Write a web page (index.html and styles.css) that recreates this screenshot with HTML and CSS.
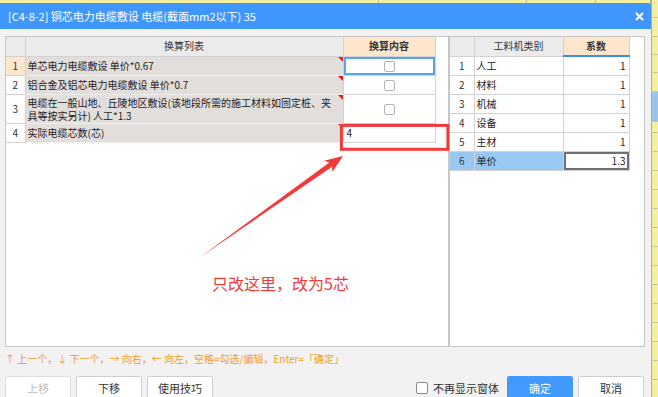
FILE: index.html
```html
<!DOCTYPE html>
<html lang="zh-CN">
<head>
    <meta charset="UTF-8">
    <title>换算</title>
    <link rel="stylesheet" href="styles.css">
</head>
<body>
    <div class="sheet">
        <div class="srow top"><span class="c c1"></span><span class="c c2"></span><span class="c c3"></span><span class="c c4"></span><span class="c c5"></span></div>
        <div class="srow r15"><span class="c c1"></span><span class="c c2"></span><span class="c c3"></span><span class="c c4"></span><span class="c c5"></span></div>
        <div class="srow"><span class="c c1"></span><span class="c c2"></span><span class="c c3"></span><span class="c c4"></span><span class="c c5"></span></div>
        <div class="srow r18"><span class="c c1"></span><span class="c c2"></span><span class="c c3"></span><span class="c c4"></span><span class="c c5"></span></div>
        <div class="srow r18"><span class="c c1"></span><span class="c c2"></span><span class="c c3"></span><span class="c c4"></span><span class="c c5"></span></div>
        <div class="srow"><span class="c c1"></span><span class="c c2"></span><span class="c c3"></span><span class="c c4"></span><span class="c c5"></span></div>
        <div class="srow r30"><span class="c c1"></span><span class="c c2"></span><span class="c c3"></span><span class="c c4"></span><span class="c c5 sel"></span></div>
        <div class="srow r11"><span class="c c1"></span><span class="c c2"></span><span class="c c3"></span><span class="c c4"></span><span class="c c5"></span></div>
        <div class="srow"><span class="c c1"></span><span class="c c2"></span><span class="c c3"></span><span class="c c4"></span><span class="c c5"></span></div>
        <div class="srow"><span class="c c1"></span><span class="c c2"></span><span class="c c3"></span><span class="c c4"></span><span class="c c5"></span></div>
        <div class="srow"><span class="c c1"></span><span class="c c2"></span><span class="c c3"></span><span class="c c4"></span><span class="c c5"></span></div>
        <div class="srow"><span class="c c1"></span><span class="c c2"></span><span class="c c3"></span><span class="c c4"></span><span class="c c5"></span></div>
        <div class="srow"><span class="c c1"></span><span class="c c2"></span><span class="c c3"></span><span class="c c4"></span><span class="c c5"></span></div>
        <div class="srow"><span class="c c1"></span><span class="c c2"></span><span class="c c3"></span><span class="c c4"></span><span class="c c5"></span></div>
        <div class="srow"><span class="c c1"></span><span class="c c2"></span><span class="c c3"></span><span class="c c4"></span><span class="c c5"></span></div>
        <div class="srow"><span class="c c1"></span><span class="c c2"></span><span class="c c3"></span><span class="c c4"></span><span class="c c5"></span></div>
        <div class="srow"><span class="c c1"></span><span class="c c2"></span><span class="c c3"></span><span class="c c4"></span><span class="c c5"></span></div>
        <div class="srow"><span class="c c1"></span><span class="c c2"></span><span class="c c3"></span><span class="c c4"></span><span class="c c5"></span></div>
        <div class="srow"><span class="c c1"></span><span class="c c2"></span><span class="c c3"></span><span class="c c4"></span><span class="c c5"></span></div>
        <div class="srow"><span class="c c1"></span><span class="c c2"></span><span class="c c3"></span><span class="c c4"></span><span class="c c5"></span></div>
        <div class="srow"><span class="c c1"></span><span class="c c2"></span><span class="c c3"></span><span class="c c4"></span><span class="c c5"></span></div>
        <div class="srow"><span class="c c1"></span><span class="c c2"></span><span class="c c3"></span><span class="c c4"></span><span class="c c5"></span></div>
    </div>

    <div class="dialog">
        <div class="titlebar">
            <span class="title">[C4-8-2] 铜芯电力电缆敷设 电缆(截面mm2以下) 35</span>
            <svg class="close" width="9" height="9" viewBox="0 0 9 9"><path d="M1 1L8 8M8 1L1 8" stroke="#fff" stroke-width="2"/></svg>
        </div>
        <div class="dlg-body">
            <div class="panels">
                <div class="panel left">
                    <table class="grid calc">
                        <colgroup><col class="w-idx"><col class="w-name"><col class="w-val"></colgroup>
                        <tr class="head">
                            <th></th>
                            <th>换算列表</th>
                            <th class="hl">换算内容</th>
                        </tr>
                        <tr>
                            <td class="idx cur">1</td>
                            <td class="name mark curline">单芯电力电缆敷设 单价*0.67</td>
                            <td class="val focus"><span class="cb"></span></td>
                        </tr>
                        <tr>
                            <td class="idx">2</td>
                            <td class="name mark">铝合金及铝芯电力电缆敷设 单价*0.7</td>
                            <td class="val"><span class="cb"></span></td>
                        </tr>
                        <tr class="tall">
                            <td class="idx">3</td>
                            <td class="name mark"><div class="ln">电缆在一般山地、丘陵地区敷设(该地段所需的施工材料如固定桩、夹</div><div class="ln">具等按实另计) 人工*1.3</div></td>
                            <td class="val"><span class="cb"></span></td>
                        </tr>
                        <tr>
                            <td class="idx">4</td>
                            <td class="name mark">实际电缆芯数(芯)</td>
                            <td class="val text">4</td>
                        </tr>
                    </table>
                </div>
                <div class="panel right">
                    <table class="grid coef">
                        <colgroup><col class="w-ridx"><col class="w-rname"><col class="w-rval"></colgroup>
                        <tr class="head">
                            <th></th>
                            <th>工料机类别</th>
                            <th class="hl sorted">系数</th>
                        </tr>
                        <tr><td class="idx">1</td><td>人工</td><td class="num">1</td></tr>
                        <tr><td class="idx">2</td><td>材料</td><td class="num">1</td></tr>
                        <tr><td class="idx">3</td><td>机械</td><td class="num">1</td></tr>
                        <tr><td class="idx">4</td><td>设备</td><td class="num">1</td></tr>
                        <tr><td class="idx">5</td><td>主材</td><td class="num">1</td></tr>
                        <tr class="picked"><td class="idx">6</td><td>单价</td><td class="num edit">1.3</td></tr>
                    </table>
                </div>
            </div>
            <div class="hint">↑ 上一个，↓ 下一个，→ 向右，← 向左，空格=勾选/编辑，Enter=「确定」</div>
            <div class="footer">
                <div class="btns">
                    <button disabled>上移</button>
                    <button>下移</button>
                    <button>使用技巧</button>
                </div>
                <div class="btns">
                    <label class="chk"><span class="box"></span>不再显示窗体</label>
                    <button class="primary">确定</button>
                    <button>取消</button>
                </div>
            </div>
        </div>
    </div>

    <svg class="annot" width="658" height="397" viewBox="0 0 658 397">
        <rect x="341.4" y="125.4" width="106.5" height="23.9" fill="none" stroke="#f23a3a" stroke-width="3"/>
        <polygon points="199,258 332.1,166.7 332.4,172.1 343,156 324.2,160.7 329.3,162.6" fill="#f23a3a"/>
        <text x="212" y="290" class="note">只改这里，改为5芯</text>
    </svg>
</body>
</html>
```

FILE: styles.css
```css
body {
    margin: 0;
    width: 658px;
    height: 397px;
    overflow: hidden;
    position: relative;
    background: #f4ee9f;
    font-family: "Noto Sans CJK SC", "Noto Sans", sans-serif;
    font-size: 10px;
    color: #222;
}

/* spreadsheet behind the dialog */
.sheet {
    display: flex;
    flex-direction: column;
}

.srow {
    display: flex;
    height: 19px;
    border-bottom: 1px solid #cfc99a;
    box-sizing: border-box;
}

.srow.top { height: 3px; border-bottom: none; }
.srow.r15 { height: 15px; }
.srow.r18 { height: 18px; }
.srow.r30 { height: 30px; }
.srow.r11 { height: 11px; }

.srow .c {
    flex: none;
    border-right: 1px solid #c3bf9c;
    box-sizing: border-box;
}

.c1 { width: 379px; }
.c2 { width: 148px; }
.c3 { width: 69px; }
.srow .c4 { width: 56px; border-right: 2px solid #a9a9a9; }
.srow .c5 { flex: 1; border-right: none; }
.c5.sel { background: #9cc3ea; }

/* dialog */
.dialog {
    position: absolute;
    left: 0;
    top: 3px;
    width: 651px;
    height: 400px;
    background: #f2f2f2;
    border-top-right-radius: 3px;
}

.titlebar {
    height: 26px;
    background: #3f97fd;
    color: #fff;
    display: flex;
    align-items: center;
    justify-content: space-between;
    padding: 0 7px 0 8px;
    font-size: 11px;
    border-top-right-radius: 3px;
}

.close {
    display: block;
}

.dlg-body {
    padding: 7px 6px 0 5px;
}

.panels {
    display: flex;
    height: 311px;
}

.panel {
    background: #fff;
    border: 1px solid #c6c6c6;
    box-sizing: border-box;
    height: 100%;
}

.panel.left { width: 444px; }
.panel.right { width: 196px; }

/* grids */
.grid {
    border-collapse: collapse;
    table-layout: fixed;
}

.grid th,
.grid td {
    border: 1px solid #d2d2d2;
    height: 18px;
    padding: 0 2px;
    white-space: nowrap;
    overflow: hidden;
    line-height: 12px;
    box-sizing: border-box;
}

.grid tr:first-child th { border-top: none; }
.grid th:first-child,
.grid td:first-child { border-left: none; }

.grid th {
    background: #ebebeb;
    font-weight: normal;
    color: #333;
}

.grid th.hl {
    background: #fde6cb;
    font-weight: bold;
}

.grid th.sorted {
    border-bottom: 2px solid #3b8ee6;
}

.calc { width: 429px; }
.w-idx { width: 19px; }
.w-name { width: 318px; }
.w-val { width: 92px; }

.calc tr { height: 19px; }
.calc tr.tall { height: 29px; }
.calc tr.tall td.name { padding-top: 0; padding-bottom: 0; }
.calc .ln { height: 13px; line-height: 13px; overflow: hidden; }

.grid td.idx {
    text-align: center;
    padding: 0;
    color: #333;
}

.calc td.idx.cur { background: #fde6cb; }

.calc td.name {
    background: #e2dedc;
    border-top-color: #f2f0ef;
    border-bottom-color: #f2f0ef;
    color: #222;
}

.calc td.curline { border-left: 1px solid #3c8ce6; }

.mark { position: relative; }

.mark::after {
    content: "";
    position: absolute;
    top: 0;
    right: 0;
    border-top: 5px solid #e51c1c;
    border-left: 5px solid transparent;
}

.calc td.val { text-align: center; }
.calc td.val.text { text-align: left; padding-left: 3px; }
.calc td.focus { box-shadow: inset 0 0 0 2px #5aa2f3; }

.cb {
    display: inline-block;
    width: 11px;
    height: 11px;
    border: 1px solid #b4b4b4;
    border-radius: 2px;
    box-sizing: border-box;
    vertical-align: middle;
}

.coef { width: 179px; }
.w-ridx { width: 24px; }
.w-rname { width: 89px; }
.w-rval { width: 66px; }

.coef tr { height: 19px; }
.coef td.num { text-align: right; padding-right: 3px; }
.coef tr.picked td { background: #99c8f3; }
.coef tr.picked td.edit {
    background: #fff;
    box-shadow: inset 0 0 0 2px #707070;
}

/* footer */
.hint {
    margin-top: 4px;
    height: 16px;
    line-height: 16px;
    color: #f39b2b;
    font-size: 10px;
}

.footer {
    display: flex;
    justify-content: space-between;
    margin-top: 9px;
    padding-right: 1px;
}

.btns {
    display: flex;
    align-items: center;
    gap: 5px;
}

.btns button {
    width: 66px;
    height: 24px;
    background: #fff;
    border: 1px solid #cfcfcf;
    border-radius: 2px;
    font-family: inherit;
    font-size: 11px;
    color: #333;
    padding: 0;
}

.btns button:disabled {
    color: #bdbdbd;
    border-color: #dedede;
}

.btns button.primary {
    background: #4499ff;
    border-color: #4499ff;
    color: #fff;
    margin-left: 3px;
}

.chk {
    display: flex;
    align-items: center;
    font-size: 11px;
    color: #333;
}

.chk .box {
    width: 12px;
    height: 12px;
    border: 1px solid #8a8a8a;
    border-radius: 2px;
    background: #fff;
    box-sizing: border-box;
    margin-right: 5px;
}

/* annotation drawn over the screenshot */
.annot {
    position: absolute;
    left: 0;
    top: 0;
    pointer-events: none;
}

.note {
    font-family: "Noto Sans CJK SC", sans-serif;
    font-size: 16px;
    fill: #f03c3c;
}
```
